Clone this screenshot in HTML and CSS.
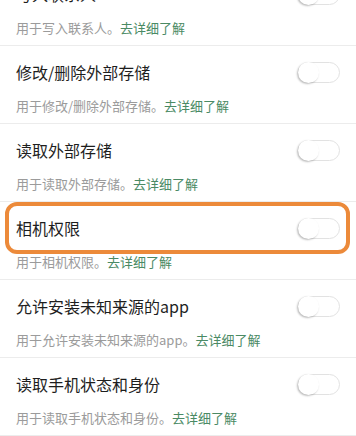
FILE: index.html
```html
<!DOCTYPE html>
<html lang="zh-CN">
<head>
<meta charset="UTF-8" />
<meta name="viewport" content="width=device-width, initial-scale=1" />
<title>权限管理</title>
<link rel="stylesheet" href="styles.css">
</head>
<body>

<div class="perm-list">
  <div class="perm-item">
    <div class="perm-head">
      <span class="perm-title">写入联系人</span>
      <span class="switch"><span class="knob"></span></span>
    </div>
    <p class="perm-desc">用于写入联系人。<a class="more">去详细了解</a></p>
  </div>

  <div class="perm-item">
    <div class="perm-head">
      <span class="perm-title">修改/删除外部存储</span>
      <span class="switch"><span class="knob"></span></span>
    </div>
    <p class="perm-desc">用于修改/删除外部存储。<a class="more">去详细了解</a></p>
  </div>

  <div class="perm-item">
    <div class="perm-head">
      <span class="perm-title">读取外部存储</span>
      <span class="switch"><span class="knob"></span></span>
    </div>
    <p class="perm-desc">用于读取外部存储。<a class="more">去详细了解</a></p>
  </div>

  <div class="perm-item">
    <div class="perm-head marked">
      <span class="perm-title">相机权限</span>
      <span class="switch"><span class="knob"></span></span>
    </div>
    <p class="perm-desc">用于相机权限。<a class="more">去详细了解</a></p>
  </div>

  <div class="perm-item">
    <div class="perm-head">
      <span class="perm-title">允许安装未知来源的app</span>
      <span class="switch"><span class="knob"></span></span>
    </div>
    <p class="perm-desc">用于允许安装未知来源的app。<a class="more">去详细了解</a></p>
  </div>

  <div class="perm-item">
    <div class="perm-head">
      <span class="perm-title">读取手机状态和身份</span>
      <span class="switch"><span class="knob"></span></span>
    </div>
    <p class="perm-desc">用于读取手机状态和身份。<a class="more">去详细了解</a></p>
  </div>
</div>

</body>
</html>
```

FILE: styles.css
```css
html, body {
  margin: 0;
  padding: 0;
  background: #fff;
  overflow: hidden;
}
body {
  font-family: "Noto Sans CJK SC", "Noto Sans", sans-serif;
}
.perm-list {
  margin-top: -32px;
}
.perm-item {
  border-bottom: 1px solid #ececec;
  padding-bottom: 9px;
}
.perm-head {
  position: relative;
  height: 52px;
  display: flex;
  align-items: center;
  justify-content: space-between;
  padding: 0 16px;
}
.perm-title {
  font-size: 16px;
  color: #1e1e1e;
}
.perm-desc {
  margin: 0;
  padding: 0 16px;
  font-size: 13px;
  line-height: 16px;
  color: #9b9b9b;
}
.more {
  color: #4a8a64;
}
.switch {
  position: relative;
  width: 40px;
  height: 19px;
  border: 1px solid #e2e2e2;
  border-radius: 11px;
  background: #fff;
}
.knob {
  position: absolute;
  left: -1px;
  top: -1px;
  width: 21px;
  height: 21px;
  border-radius: 50%;
  background: #fff;
  box-shadow: -1px 1px 2px rgba(0, 0, 0, 0.28);
}
.marked::after {
  content: "";
  position: absolute;
  left: 5px;
  right: 6px;
  top: 0;
  bottom: 0;
  border: 4px solid #ec8a3a;
  border-radius: 12px;
}
```
